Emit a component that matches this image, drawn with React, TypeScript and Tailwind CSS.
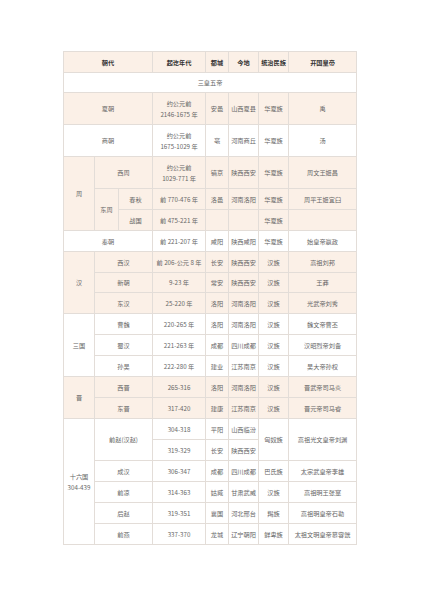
import React from 'react';

const beige = 'bg-[#fbf0e7]';
const cell = 'border border-[#e3ddd8] text-center align-middle p-0 whitespace-nowrap overflow-visible';

type Row = {
  era?: React.ReactNode;
  years: React.ReactNode;
  capital: string;
  place: string;
  people: string;
  founder: string;
  h?: string;
};

function Two({ a, b }: { a: string; b: string }) {
  return (
    <>
      <div>{a}</div>
      <div>{b}</div>
    </>
  );
}

export default function App() {
  return (
    <div
      className="w-[423px] h-[600px] bg-white pt-[51px] pl-[63px]"
      style={{ fontFamily: '"Noto Sans CJK SC", "Noto Sans", sans-serif' }}
    >
      <table className="border-collapse table-fixed w-[293px] text-[6.2px] leading-[11px] text-[#666]">
        <colgroup>
          <col className="w-[31px]" />
          <col className="w-[24px]" />
          <col className="w-[34px]" />
          <col className="w-[53px]" />
          <col className="w-[23px]" />
          <col className="w-[30px]" />
          <col className="w-[30px]" />
          <col className="w-[68px]" />
        </colgroup>
        <tbody>
          {/* Header */}
          <tr className={`h-[21px] ${beige} text-[#333] font-bold`}>
            <td colSpan={3} className={cell}>朝代</td>
            <td className={cell}>起讫年代</td>
            <td className={cell}>都城</td>
            <td className={cell}>今地</td>
            <td className={cell}>统治民族</td>
            <td className={cell}>开国皇帝</td>
          </tr>
          <tr className="h-[20px] bg-white">
            <td colSpan={8} className={cell}>三皇五帝</td>
          </tr>

          {/* 夏 / 商 */}
          <tr className={`h-[32px] ${beige}`}>
            <td colSpan={3} className={cell}>夏朝</td>
            <td className={cell}><Two a="约公元前" b="2146-1675 年" /></td>
            <td className={cell}>安邑</td>
            <td className={cell}>山西夏县</td>
            <td className={cell}>华夏族</td>
            <td className={cell}>禹</td>
          </tr>
          <tr className="h-[32px] bg-white">
            <td colSpan={3} className={cell}>商朝</td>
            <td className={cell}><Two a="约公元前" b="1675-1029 年" /></td>
            <td className={cell}>亳</td>
            <td className={cell}>河南商丘</td>
            <td className={cell}>华夏族</td>
            <td className={cell}>汤</td>
          </tr>

          {/* 周 */}
          <tr className={`h-[32px] ${beige}`}>
            <td rowSpan={3} className={cell}>周</td>
            <td colSpan={2} className={cell}>西周</td>
            <td className={cell}><Two a="约公元前" b="1029-771 年" /></td>
            <td className={cell}>镐京</td>
            <td className={cell}>陕西西安</td>
            <td className={cell}>华夏族</td>
            <td className={cell}>周文王姬昌</td>
          </tr>
          <tr className={`h-[21px] ${beige}`}>
            <td rowSpan={2} className={cell}>东周</td>
            <td className={cell}>春秋</td>
            <td className={cell}>前 770-476 年</td>
            <td className={cell}>洛邑</td>
            <td className={cell}>河南洛阳</td>
            <td className={cell}>华夏族</td>
            <td className={cell}>周平王姬宜臼</td>
          </tr>
          <tr className={`h-[21px] ${beige}`}>
            <td className={cell}>战国</td>
            <td className={cell}>前 475-221 年</td>
            <td className={cell}></td>
            <td className={cell}></td>
            <td className={cell}>华夏族</td>
            <td className={cell}></td>
          </tr>

          {/* 秦 */}
          <tr className="h-[21px] bg-white">
            <td colSpan={3} className={cell}>秦朝</td>
            <td className={cell}>前 221-207 年</td>
            <td className={cell}>咸阳</td>
            <td className={cell}>陕西咸阳</td>
            <td className={cell}>华夏族</td>
            <td className={cell}>始皇帝嬴政</td>
          </tr>

          <Group
            name="汉"
            bg={beige}
            rows={[
              { era: '西汉', years: '前 206-公元 8 年', capital: '长安', place: '陕西西安', people: '汉族', founder: '高祖刘邦' },
              { era: '新朝', years: '9-23 年', capital: '常安', place: '陕西西安', people: '汉族', founder: '王莽', h: 'h-[20px]' },
              { era: '东汉', years: '25-220 年', capital: '洛阳', place: '河南洛阳', people: '汉族', founder: '光武帝刘秀' },
            ]}
          />
          <Group
            name="三国"
            bg="bg-white"
            rows={[
              { era: '曹魏', years: '220-265 年', capital: '洛阳', place: '河南洛阳', people: '汉族', founder: '魏文帝曹丕' },
              { era: '蜀汉', years: '221-263 年', capital: '成都', place: '四川成都', people: '汉族', founder: '汉昭烈帝刘备' },
              { era: '孙吴', years: '222-280 年', capital: '建业', place: '江苏南京', people: '汉族', founder: '吴大帝孙权' },
            ]}
          />
          <Group
            name="晋"
            bg={beige}
            rows={[
              { era: '西晋', years: '265-316', capital: '洛阳', place: '河南洛阳', people: '汉族', founder: '晋武帝司马炎' },
              { era: '东晋', years: '317-420', capital: '建康', place: '江苏南京', people: '汉族', founder: '晋元帝司马睿' },
            ]}
          />

          {/* 十六国 */}
          <tr className="h-[21px] bg-white">
            <td rowSpan={6} className={cell}><Two a="十六国" b="304-439" /></td>
            <td rowSpan={2} colSpan={2} className={cell}>前赵(汉赵)</td>
            <td className={cell}>304-318</td>
            <td className={cell}>平阳</td>
            <td className={cell}>山西临汾</td>
            <td rowSpan={2} className={cell}>匈奴族</td>
            <td rowSpan={2} className={cell}>高祖光文皇帝刘渊</td>
          </tr>
          <tr className="h-[21px] bg-white">
            <td className={cell}>319-329</td>
            <td className={cell}>长安</td>
            <td className={cell}>陕西西安</td>
          </tr>
          {[
            ['成汉', '306-347', '成都', '四川成都', '巴氐族', '太宗武皇帝李雄'],
            ['前凉', '314-363', '姑臧', '甘肃武威', '汉族', '高祖明王张寔'],
            ['后赵', '319-351', '襄国', '河北邢台', '羯族', '高祖明皇帝石勒'],
            ['前燕', '337-370', '龙城', '辽宁朝阳', '鲜卑族', '太祖文明皇帝慕容皝'],
          ].map((r) => (
            <tr key={r[0]} className="h-[21px] bg-white">
              <td colSpan={2} className={cell}>{r[0]}</td>
              <td className={cell}>{r[1]}</td>
              <td className={cell}>{r[2]}</td>
              <td className={cell}>{r[3]}</td>
              <td className={cell}>{r[4]}</td>
              <td className={cell}>{r[5]}</td>
            </tr>
          ))}
        </tbody>
      </table>
    </div>
  );
}

function Group({ name, bg, rows }: { name: string; bg: string; rows: Row[] }) {
  return (
    <>
      {rows.map((r, i) => (
        <tr key={i} className={`${r.h ?? 'h-[21px]'} ${bg}`}>
          {i === 0 && (
            <td rowSpan={rows.length} className={cell}>
              {name}
            </td>
          )}
          <td colSpan={2} className={cell}>{r.era}</td>
          <td className={cell}>{r.years}</td>
          <td className={cell}>{r.capital}</td>
          <td className={cell}>{r.place}</td>
          <td className={cell}>{r.people}</td>
          <td className={cell}>{r.founder}</td>
        </tr>
      ))}
    </>
  );
}
